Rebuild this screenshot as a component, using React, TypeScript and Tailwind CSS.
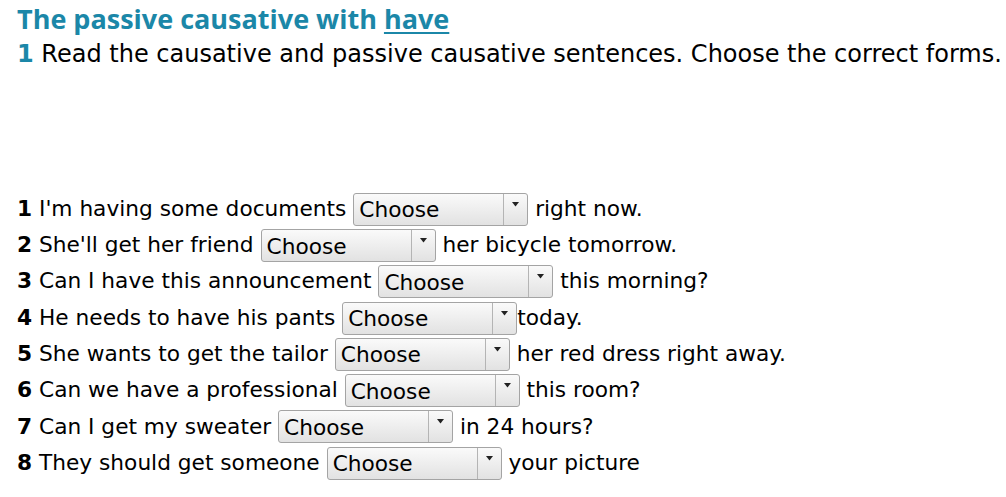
const rows = [
  { n: 1, before: "I'm having some documents", after: "right now.", gapAfter: true },
  { n: 2, before: "She'll get her friend", after: "her bicycle tomorrow.", gapAfter: true },
  { n: 3, before: "Can I have this announcement", after: "this morning?", gapAfter: true },
  { n: 4, before: "He needs to have his pants", after: "today.", gapAfter: false },
  { n: 5, before: "She wants to get the tailor", after: "her red dress right away.", gapAfter: true },
  { n: 6, before: "Can we have a professional", after: "this room?", gapAfter: true },
  { n: 7, before: "Can I get my sweater", after: "in 24 hours?", gapAfter: true },
  { n: 8, before: "They should get someone", after: "your picture", gapAfter: true },
]

function ChooseBox() {
  return (
    <div className="flex h-[33px] w-[175px] shrink-0 rounded-[3px] border border-[#a4a4a4] bg-gradient-to-b from-[#fafafa] to-[#e2e2e2]">
      <div className="flex flex-1 items-center pl-[5px] pt-[2px] text-[21.7px] leading-none text-black">Choose</div>
      <div className="flex w-[24px] justify-center border-l border-[#b4b4b4] pt-[8px]">
        <svg width="7" height="5" viewBox="0 0 7 5">
          <path d="M0 0 L7 0 L3.5 4.5 Z" fill="#222" />
        </svg>
      </div>
    </div>
  )
}

export default function App() {
  return (
    <div className="min-h-[497px] w-[1006px] bg-white pl-[17px] font-['DejaVu_Sans',sans-serif] text-black">
      <h1 className="pt-[2px] font-['Open_Sans',sans-serif] text-[27px] font-bold leading-[34px] tracking-[0px] text-[#1b87a8]">
        The passive causative with{" "}
        <span className="underline decoration-[1.5px] underline-offset-[3px]">have</span>
      </h1>
      <p className="mt-[3px] text-[24px] leading-[30px]">
        <span className="font-bold text-[#1b87a8]">1</span> Read the causative and passive causative sentences. Choose
        the correct forms.
      </p>

      <div className="mt-[122px] flex flex-col">
        {rows.map((r) => (
          <div key={r.n} className="flex h-[36.3px] items-center text-[21.7px] whitespace-pre">
            <span className="font-bold">{r.n}</span>
            <span> {r.before} </span>
            <ChooseBox />
            <span>{(r.gapAfter ? " " : "") + r.after}</span>
          </div>
        ))}
      </div>
    </div>
  )
}
